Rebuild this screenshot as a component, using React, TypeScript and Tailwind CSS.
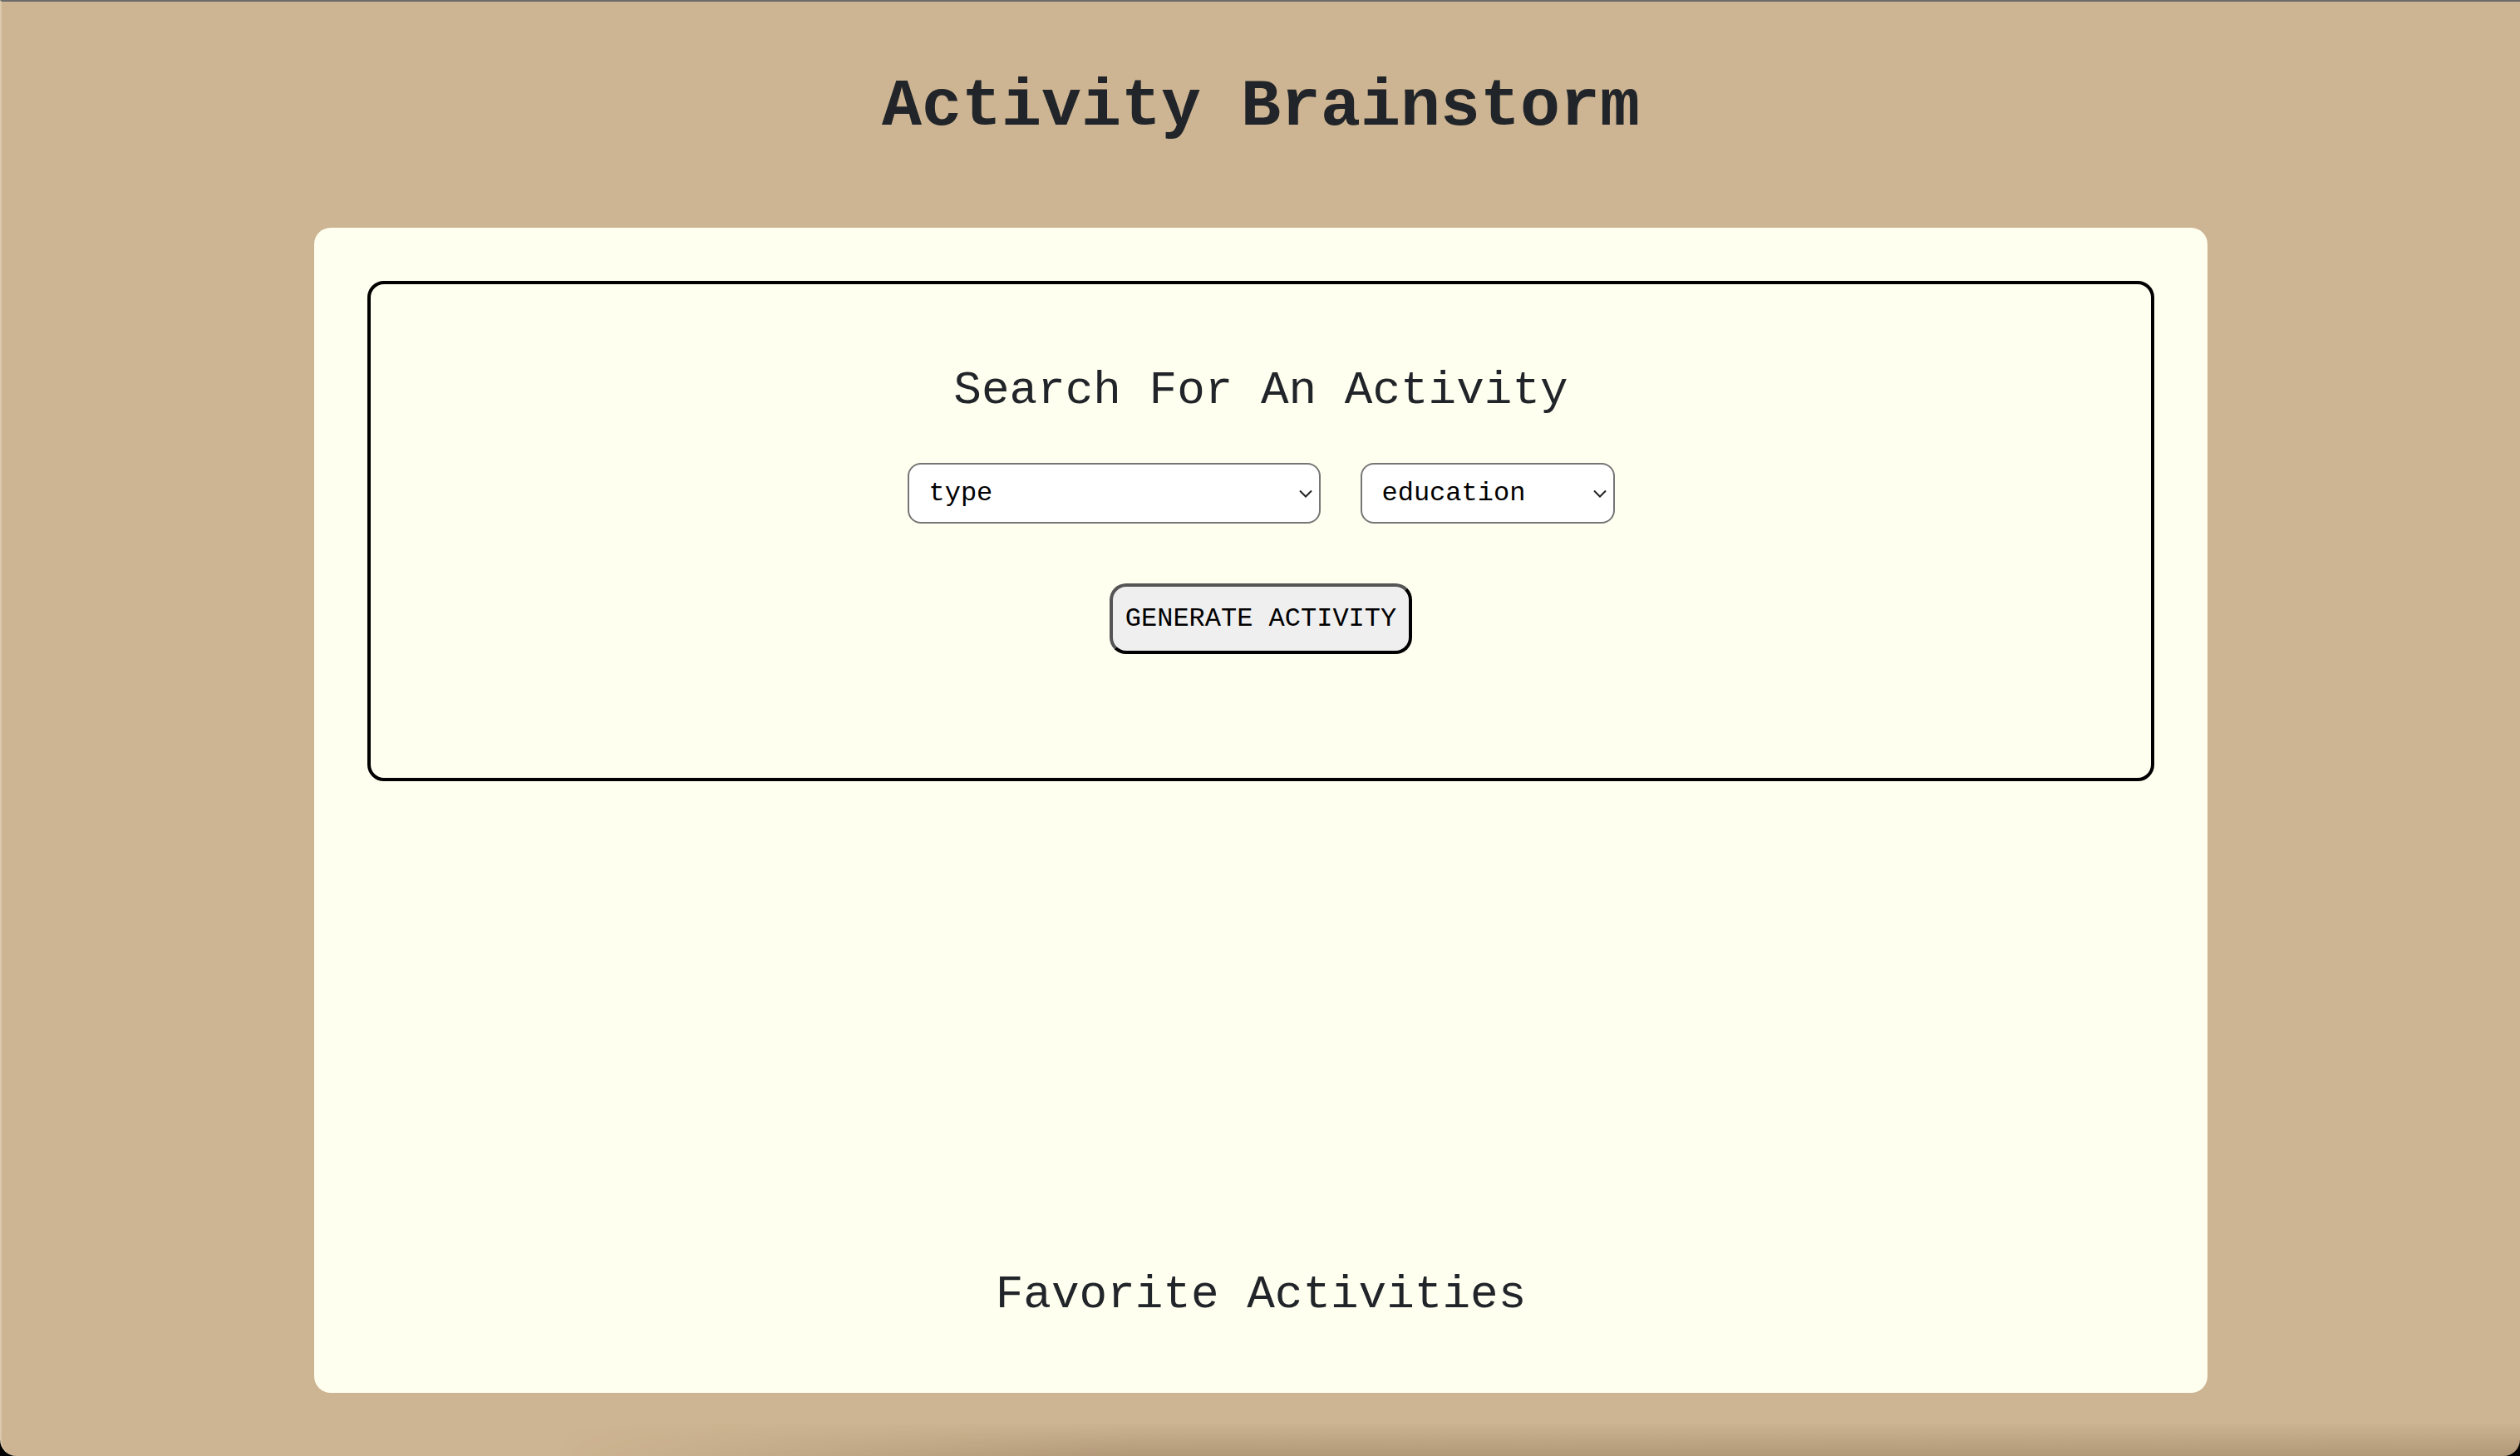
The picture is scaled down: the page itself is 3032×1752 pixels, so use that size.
import React, { useState } from 'react';

const mono = "font-['Liberation_Mono','DejaVu_Sans_Mono',monospace]";

function Chevron() {
    return (
        <svg width="18" height="11" viewBox="0 0 18 11" className="pointer-events-none absolute right-[9px] top-1/2 -translate-y-1/2">
            <path d="M2 2 L9 9 L16 2" fill="none" stroke="#222" strokeWidth="2" />
        </svg>
    );
}

export default function App() {
    const [values, setValues] = useState({ kind: 'type', topic: 'education' });

    const handleChange = (e: React.ChangeEvent<HTMLSelectElement>) => {
        const key = e.target.name;
        const value = e.target.value;
        setValues(values => ({ ...values, [key]: value }));
    };

    return (
        <div className="h-[1752px] w-full overflow-hidden bg-black">
            <div className={`${mono} flex h-[1752px] flex-col items-center overflow-hidden rounded-b-[20px] border-t-2 border-l-2 border-t-[#6b6b6b] border-l-[#dcc9ad] bg-[#cdb492] text-[#212529]`}>
                <h1 className="mt-[79px] text-[80px] font-bold leading-[96px]">Activity Brainstorm</h1>

                <div className="mt-[97px] flex h-[1402px] w-[2278px] flex-col rounded-[20px] bg-[#fffff0] p-[64px]">
                    <section className="flex h-[602px] flex-col items-center rounded-[20px] border-4 border-black pt-[95px]">
                        <h2 className="text-[56px] leading-[67px]">Search For An Activity</h2>

                        <div className="mt-[53px] flex gap-[48px]">
                            <div className="relative">
                                <select
                                    name="kind"
                                    value={values.kind}
                                    onChange={handleChange}
                                    className={`${mono} h-[73px] w-[497px] appearance-none rounded-[16px] border-2 border-[#767676] bg-white pl-[24px] text-[32px] text-black`}
                                >
                                    <option value="type">type</option>
                                </select>
                                <Chevron />
                            </div>
                            <div className="relative">
                                <select
                                    name="topic"
                                    value={values.topic}
                                    onChange={handleChange}
                                    className={`${mono} h-[73px] w-[306px] appearance-none rounded-[16px] border-2 border-[#767676] bg-white pl-[24px] text-[32px] text-black`}
                                >
                                    <option value="education">education</option>
                                    <option value="recreational">recreational</option>
                                    <option value="social">social</option>
                                </select>
                                <Chevron />
                            </div>
                        </div>

                        <button className={`${mono} mt-[72px] h-[85px] w-[364px] rounded-[20px] border-4 border-t-[#555] border-l-[#555] border-r-black border-b-black bg-[#efefef] text-[32px] text-black`}>
                            GENERATE ACTIVITY
                        </button>
                    </section>

                    <h2 className="mt-[585px] text-center text-[56px] leading-[67px]">Favorite Activities</h2>
                </div>

                <div className="mt-auto h-[40px] w-full bg-[linear-gradient(to_bottom,transparent,rgba(80,55,25,0.22))] [mask-image:linear-gradient(to_right,transparent_22%,black_45%)]"></div>
            </div>
        </div>
    );
}
